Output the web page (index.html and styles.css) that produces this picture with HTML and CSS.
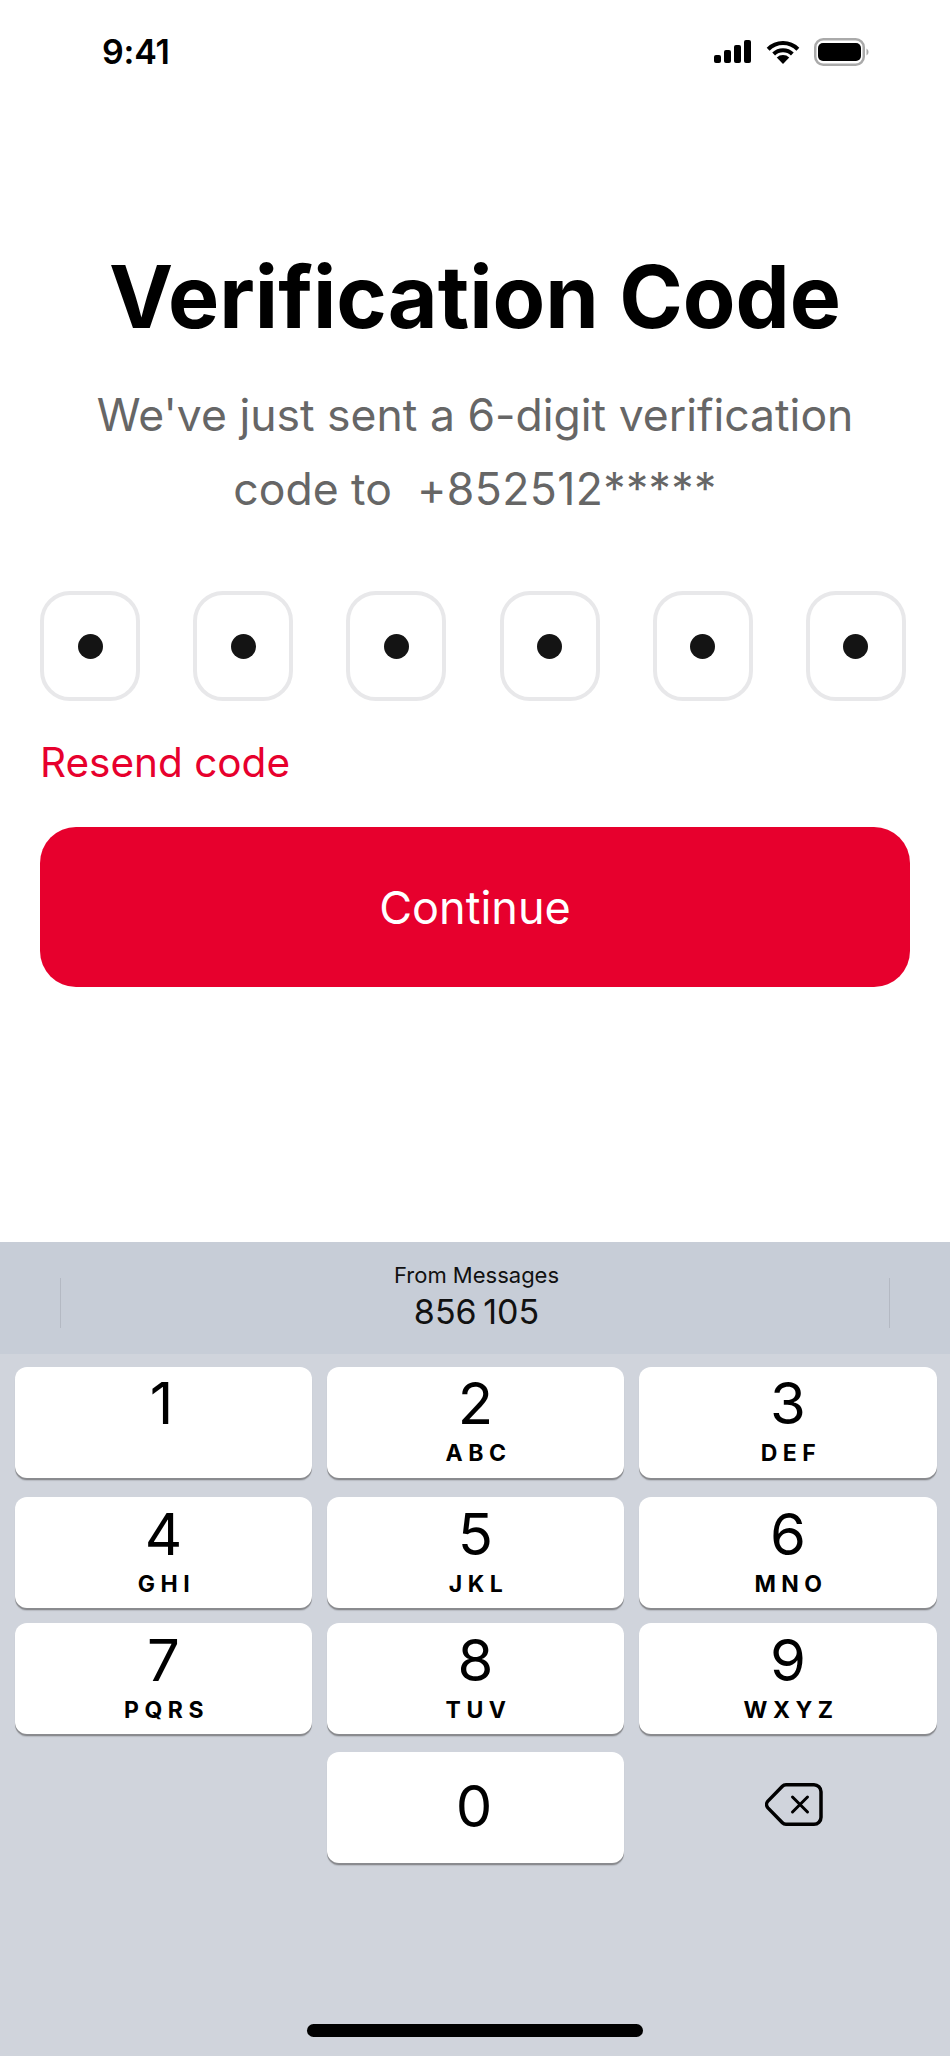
FILE: index.html
```html
<!DOCTYPE html>
<html lang="en">
<head>
  <meta charset="UTF-8">
  <meta name="viewport" content="width=device-width, initial-scale=1.0">
  <title>Verification Code</title>
  <link rel="stylesheet" href="styles.css">
</head>
<body>
  <div class="status-bar">
    <span class="clock">9:41</span>
    <div class="status-icons">
      <svg class="icon-signal" width="37" height="23" viewBox="0 0 37 23">
        <rect x="0" y="15" width="7" height="8" rx="2"/>
        <rect x="10" y="10" width="7" height="13" rx="2"/>
        <rect x="20" y="5" width="7" height="18" rx="2"/>
        <rect x="30" y="0" width="7" height="23" rx="2"/>
      </svg>
      <svg class="icon-wifi" width="34" height="23" viewBox="0 0 34 24">
        <path d="M17 24l-6.500-6.800a9.500 9.500 0 0 1 13 0z"/>
        <path d="M17 7.500a16 16 0 0 1 11.200 4.600l-2.900 3a12 12 0 0 0-16.600 0l-2.900-3A16 16 0 0 1 17 7.500z"/>
        <path d="M17 0a24 24 0 0 1 17 7l-3 3.100a19.700 19.700 0 0 0-28 0L0 7a24 24 0 0 1 17-7z"/>
      </svg>
      <svg class="icon-battery" width="55" height="28" viewBox="0 0 55 28">
        <rect x="1.250" y="1.250" width="48.500" height="25.500" rx="8" fill="none" stroke="#aaa" stroke-width="2.500"/>
        <rect x="4" y="5" width="43" height="18" rx="5"/>
        <path d="M52.500 10.500a4 4 0 0 1 0 7z" fill="#aaa"/>
      </svg>
    </div>
  </div>

  <main class="content">
    <h1 class="title">Verification Code</h1>
    <p class="subtitle">We've just sent a 6-digit verification<br>code to&nbsp; <span class="phone">+852512*****</span></p>

    <div class="code-row">
      <div class="code-box"><span class="code-dot"></span></div>
      <div class="code-box"><span class="code-dot"></span></div>
      <div class="code-box"><span class="code-dot"></span></div>
      <div class="code-box"><span class="code-dot"></span></div>
      <div class="code-box"><span class="code-dot"></span></div>
      <div class="code-box"><span class="code-dot"></span></div>
    </div>

    <a class="resend" href="#">Resend code</a>
    <button class="continue">Continue</button>
  </main>

  <div class="keyboard">
    <div class="suggestion">
      <div class="suggestion-text">
        <div class="suggestion-label">From Messages</div>
        <div class="suggestion-code">856 105</div>
      </div>
    </div>

    <div class="keys">
      <div class="key-row row-1">
        <div class="key"><span class="digit digit-one">1</span></div>
        <div class="key"><span class="digit">2</span><span class="letters">ABC</span></div>
        <div class="key"><span class="digit">3</span><span class="letters">DEF</span></div>
      </div>
      <div class="key-row row-2">
        <div class="key"><span class="digit">4</span><span class="letters">GHI</span></div>
        <div class="key"><span class="digit">5</span><span class="letters">JKL</span></div>
        <div class="key"><span class="digit">6</span><span class="letters">MNO</span></div>
      </div>
      <div class="key-row row-3">
        <div class="key"><span class="digit">7</span><span class="letters">PQRS</span></div>
        <div class="key"><span class="digit">8</span><span class="letters">TUV</span></div>
        <div class="key"><span class="digit">9</span><span class="letters">WXYZ</span></div>
      </div>
      <div class="key-row row-4">
        <div class="key-blank"></div>
        <div class="key key-zero"><span class="digit">0</span></div>
        <div class="key-blank key-delete">
          <svg width="58" height="43" viewBox="0 0 58 43" fill="none" stroke="#000" stroke-width="3.500" stroke-linecap="round" stroke-linejoin="round">
            <path d="M21 1.750h28a7 7 0 0 1 7 7v25.500a7 7 0 0 1-7 7H21a5 5 0 0 1-3.600-1.500L2.900 24.900a5 5 0 0 1 0-6.800L17.400 3.300a5 5 0 0 1 3.600-1.550z"/>
            <path d="M27.500 14l15 15M42.500 14l-15 15" stroke-width="3"/>
          </svg>
        </div>
      </div>
    </div>

    <div class="home-bar"></div>
  </div>
</body>
</html>
```

FILE: styles.css
```css
html, body {
  margin: 0;
  padding: 0;
  background: #fff;
  color: #000;
  font-family: 'Inter', sans-serif;
}

body {
  width: 950px;
  height: 2056px;
  overflow: hidden;
}

/* ============ status bar ============ */
.status-bar {
  height: 102px;
  box-sizing: border-box;
  padding: 33px 81px 0 102px;
  display: flex;
  justify-content: space-between;
  align-items: flex-start;
}

.clock {
  font-size: 34px;
  line-height: 38px;
  font-weight: 600;
  letter-spacing: -.200px;
}

.status-icons {
  display: flex;
  align-items: flex-start;
  padding-top: 5px;
}

.icon-signal {
  margin: 2px 15px 0 0;
}

.icon-wifi {
  margin: 3px 14px 0 0;
}

/* ============ content ============ */
.content {
  height: 1140px;
  box-sizing: border-box;
  padding: 143px 40px 0;
}

.title {
  margin: 0;
  text-align: center;
  font-size: 86px;
  line-height: 104px;
  font-weight: 700;
}

.subtitle {
  margin: 29px 0 0;
  text-align: center;
  font-size: 44.500px;
  line-height: 74px;
  color: #666;
}

.phone {
  letter-spacing: .400px;
}

.code-row {
  margin-top: 65px;
  display: flex;
  justify-content: space-between;
  width: 866px;
}

.code-box {
  width: 100px;
  height: 110px;
  box-sizing: border-box;
  border: 4px solid #e8e8ea;
  border-radius: 30px;
  display: flex;
  align-items: center;
  justify-content: center;
}

.code-dot {
  width: 25px;
  height: 25px;
  border-radius: 50%;
  background: #141414;
}

.resend {
  display: block;
  margin-top: 38px;
  font-size: 40.500px;
  line-height: 48px;
  color: #e7002d;
  text-decoration: none;
}

.continue {
  display: block;
  margin-top: 40px;
  width: 870px;
  height: 160px;
  border: none;
  border-radius: 36px;
  background: #e7002d;
  color: #fff;
  font-family: inherit;
  font-size: 45px;
}

/* ============ keyboard ============ */
.keyboard {
  height: 814px;
  background: #d0d4dc;
  position: relative;
}

.suggestion {
  height: 112px;
  background: #c7cdd7;
  display: flex;
  justify-content: center;
  margin: 0;
  position: relative;
}

.suggestion::before,
.suggestion::after {
  content: "";
  position: absolute;
  top: 36px;
  width: 1px;
  height: 50px;
  background: #b4b9c3;
}

.suggestion::before {
  left: 60px;
}

.suggestion::after {
  right: 60px;
}

.suggestion-text {
  text-align: center;
  padding: 20px 0 0 3px;
}

.suggestion-label {
  font-size: 22px;
  line-height: 26px;
  color: #111;
}

.suggestion-code {
  font-size: 34px;
  line-height: 42px;
  margin-top: 3px;
  word-spacing: -3px;
  color: #111;
}

.keys {
  padding: 13px 14px 0 15px;
}

.key-row {
  display: grid;
  grid-template-columns: 297px 297px 298px;
  column-gap: 15px;
  height: 111px;
}

.row-2 {
  margin-top: 19px;
}

.row-3 {
  margin-top: 15px;
}

.row-4 {
  margin-top: 18px;
}

.row-2 .key,
.row-3 .key {
  padding-top: 1px;
}

.key {
  background: #fff;
  border-radius: 12px;
  box-shadow: 0 2px 0 #8a8b8f, 0 3px 1px rgba(0, 0, 0, .12);
  text-align: center;
  display: flex;
  flex-direction: column;
  align-items: center;
}

.digit {
  font-size: 58px;
  line-height: 70px;
  margin-top: 1px;
}

.digit-one {
  margin-right: 4px;
}

.letters {
  font-size: 23px;
  line-height: 26px;
  font-weight: 700;
  letter-spacing: 5.500px;
  margin: 2px 0 0 6px;
}

.key-zero .digit {
  margin-top: 19px;
  margin-right: 3px;
}

.key-delete {
  display: flex;
  justify-content: center;
  align-items: flex-start;
  padding: 31px 0 0 12px;
}

.home-bar {
  position: absolute;
  left: 307px;
  bottom: 19px;
  width: 336px;
  height: 13px;
  border-radius: 7px;
  background: #000;
}
```
